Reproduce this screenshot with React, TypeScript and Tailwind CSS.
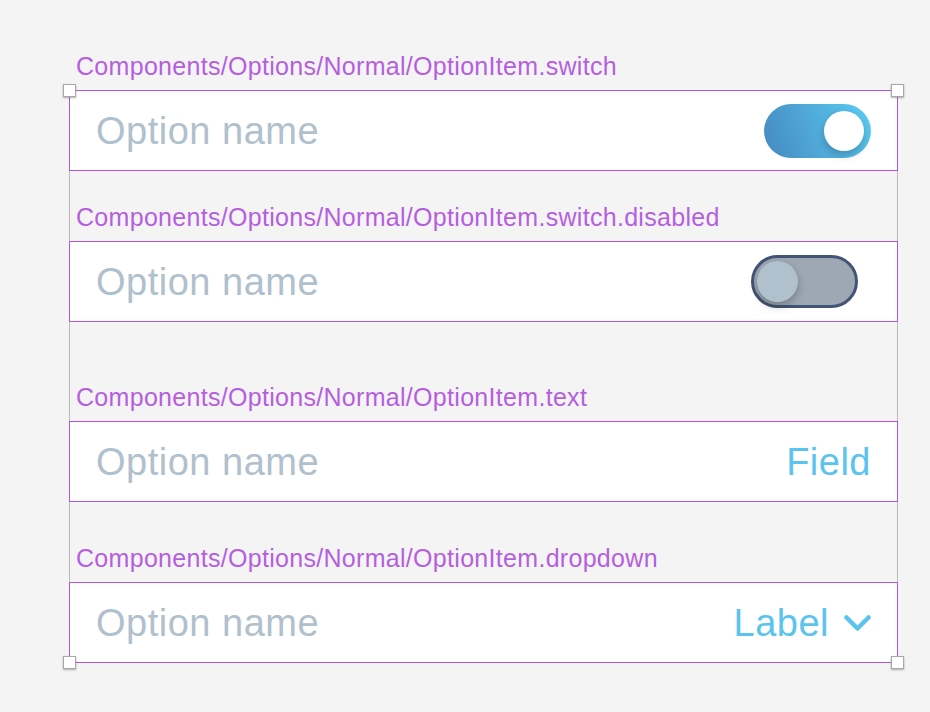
const FONT = { fontFamily: '"Liberation Sans", Arial, sans-serif' };

function Handle({ pos }: { pos: string }) {
  return (
    <div
      className={[
        "absolute h-[13px] w-[13px] border border-[#a8a8a8] bg-white shadow-[0_1px_2px_rgba(0,0,0,0.3)]",
        pos,
      ].join(" ")}
    />
  );
}

function Label({ text, inner }: { text: string; inner?: boolean }) {
  return (
    <div
      className={[
        "mb-[11px] h-[26px] text-[25px] leading-[26px] tracking-[0.3px] text-[#b55fdf]",
        inner ? "pl-[6px]" : "pl-[7px]",
      ].join(" ")}
    >
      {text}
    </div>
  );
}

function Card({ children }: { children: React.ReactNode }) {
  return (
    <div className="relative -mx-px flex h-[81px] items-center justify-between border border-[#b155dc] bg-white pl-[26px] pr-[26px]">
      <span className="text-[38px] leading-none tracking-[0.5px] text-[#b0c0cc]">Option name</span>
      {children}
    </div>
  );
}

export default function App() {
  return (
    <div className="min-h-[712px] w-[930px] bg-[#f4f4f4] pt-[53px] pl-[69px]" style={FONT}>
      <div className="w-[829px]">
        <Label text="Components/Options/Normal/OptionItem.switch" />
        <div className="relative border-x border-[#b9b9b9]">
          <Card>
            <div className="relative h-[54px] w-[107px] rounded-full bg-[linear-gradient(70deg,#4589bf,#5ccdf5)]">
              <div className="absolute right-[7px] top-[7px] h-[40px] w-[40px] rounded-full bg-white shadow-[0_4px_8px_rgba(0,0,0,0.22)]" />
            </div>
          </Card>

          <div className="mt-[33px]">
            <Label inner text="Components/Options/Normal/OptionItem.switch.disabled" />
          </div>
          <Card>
            <div className="relative mr-[13px] h-[53px] w-[107px] rounded-full border-[3px] border-[#425574] bg-[#9da8b4]">
              <div className="absolute left-[3px] top-[3px] h-[41px] w-[41px] rounded-full bg-[#b0c0cc] shadow-[0_4px_8px_rgba(0,0,0,0.25)]" />
            </div>
          </Card>

          <div className="mt-[62px]">
            <Label inner text="Components/Options/Normal/OptionItem.text" />
          </div>
          <Card>
            <span className="text-[38px] leading-none tracking-[0.5px] text-[#5bc4ee]">Field</span>
          </Card>

          <div className="mt-[43px]">
            <Label inner text="Components/Options/Normal/OptionItem.dropdown" />
          </div>
          <Card>
            <div className="flex items-center gap-[15px]">
              <span className="text-[38px] leading-none tracking-[0.5px] text-[#5bc4ee]">Label</span>
              <svg width="27" height="17" viewBox="0 0 27 17" className="mt-[2px]">
                <polyline
                  points="2.5,2.5 13.5,13.5 24.5,2.5"
                  fill="none"
                  stroke="#5bc4ee"
                  strokeWidth="4.5"
                  strokeLinecap="round"
                  strokeLinejoin="round"
                />
              </svg>
            </div>
          </Card>

          <Handle pos="-left-[7px] -top-[6px]" />
          <Handle pos="-right-[7px] -top-[6px]" />
          <Handle pos="-left-[7px] -bottom-[6px]" />
          <Handle pos="-right-[7px] -bottom-[6px]" />
        </div>
      </div>
    </div>
  );
}
